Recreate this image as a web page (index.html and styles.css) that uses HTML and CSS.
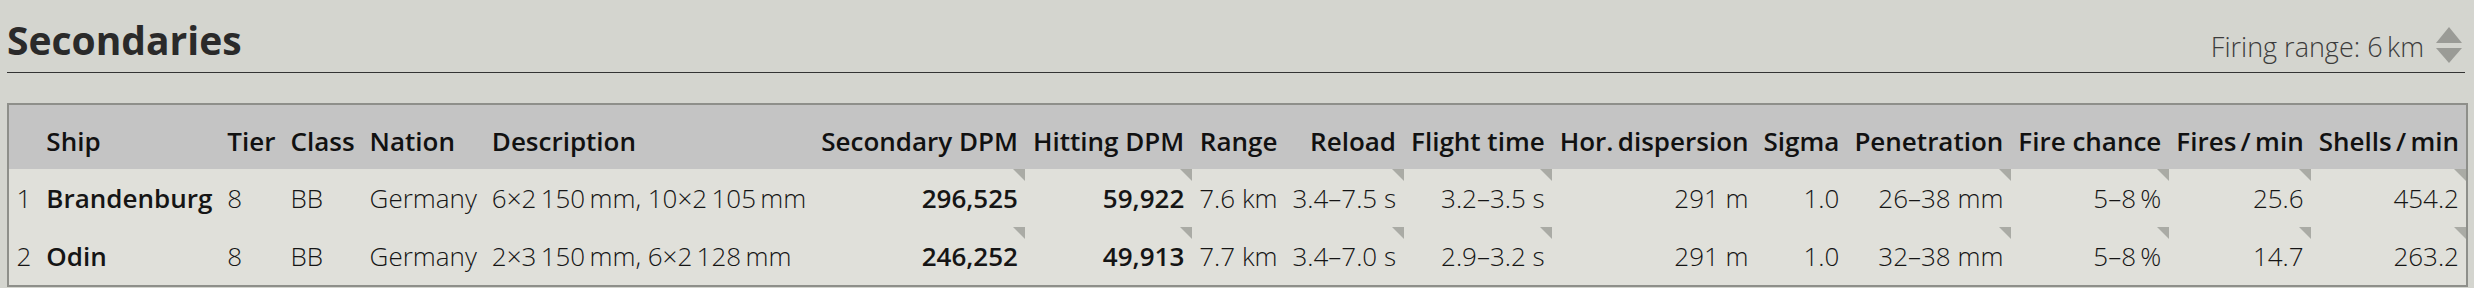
FILE: index.html
```html
<!DOCTYPE html>
<html lang="en">
<head>
<meta charset="utf-8">
<title>Secondaries</title>
<link rel="stylesheet" href="styles.css">
</head>
<body>
<div class="page">
  <div class="heading">
    <h2 class="title">Secondaries</h2>
    <div class="range">
      <span class="range-label">Firing range: 6&#8201;km</span>
      <svg class="spinner" width="26" height="36" viewBox="0 0 26 36" aria-hidden="true">
        <polygon points="13,0 26,16 0,16" fill="#9a9b96"/>
        <polygon points="0,21 26,21 13,36" fill="#9a9b96"/>
      </svg>
    </div>
  </div>
  <table class="grid">
    <thead>
      <tr>
        <th class="l"></th>
        <th class="l">Ship</th>
        <th class="l">Tier</th>
        <th class="l">Class</th>
        <th class="l">Nation</th>
        <th class="l">Description</th>
        <th>Secondary DPM</th>
        <th>Hitting DPM</th>
        <th>Range</th>
        <th>Reload</th>
        <th>Flight time</th>
        <th>Hor.&#8201;dispersion</th>
        <th>Sigma</th>
        <th>Penetration</th>
        <th>Fire chance</th>
        <th>Fires&#8201;/&#8201;min</th>
        <th>Shells&#8201;/&#8201;min</th>
      </tr>
    </thead>
    <tbody>
      <tr>
        <td class="l">1</td>
        <td class="l b">Brandenburg</td>
        <td class="l">8</td>
        <td class="l">BB</td>
        <td class="l">Germany</td>
        <td class="l">6×2&#8201;150&#8201;mm, 10×2&#8201;105&#8201;mm</td>
        <td class="b tip">296,525</td>
        <td class="b tip">59,922</td>
        <td>7.6 km</td>
        <td class="tip">3.4–7.5 s</td>
        <td class="tip">3.2–3.5 s</td>
        <td>291 m</td>
        <td>1.0</td>
        <td class="tip">26–38 mm</td>
        <td class="tip">5–8&#8201;%</td>
        <td class="tip">25.6</td>
        <td class="tip">454.2</td>
      </tr>
      <tr>
        <td class="l">2</td>
        <td class="l b">Odin</td>
        <td class="l">8</td>
        <td class="l">BB</td>
        <td class="l">Germany</td>
        <td class="l">2×3&#8201;150&#8201;mm, 6×2&#8201;128&#8201;mm</td>
        <td class="b tip">246,252</td>
        <td class="b tip">49,913</td>
        <td>7.7 km</td>
        <td class="tip">3.4–7.0 s</td>
        <td class="tip">2.9–3.2 s</td>
        <td>291 m</td>
        <td>1.0</td>
        <td class="tip">32–38 mm</td>
        <td class="tip">5–8&#8201;%</td>
        <td class="tip">14.7</td>
        <td class="tip">263.2</td>
      </tr>
    </tbody>
  </table>
</div>
</body>
</html>
```
FILE: styles.css
```css
html, body {
  margin: 0;
  padding: 0;
  background: #d4d5cf;
}

body {
  font-family: "Open Sans", "Noto Sans", sans-serif;
  color: #1a1a1a;
}

.page {
  padding: 13px 9px 0 7px;
}

.heading {
  display: flex;
  justify-content: space-between;
  align-items: flex-end;
  padding-bottom: 6px;
  border-bottom: 1px solid #333;
}

.title {
  margin: 0;
  font-size: 39px;
  font-weight: 700;
  line-height: 53px;
  color: #2a2a2a;
}

.range {
  display: flex;
  align-items: flex-end;
  gap: 12px;
  padding-right: 3px;
}

.range-label {
  font-size: 27px;
  font-weight: 300;
  line-height: 37px;
  padding-bottom: 1px;
  color: #3c3c3c;
}

.spinner {
  display: block;
  margin-bottom: 3px;
}

.grid {
  margin-top: 30px;
  border-collapse: collapse;
  border: 2px solid #8e8f8a;
  background: #e0e0da;
  white-space: nowrap;
}

.grid th {
  background: #c4c4c4;
  font-size: 26px;
  font-weight: 600;
  line-height: 35px;
  padding: 19px 7.5px 10px;
  text-align: right;
  vertical-align: bottom;
  color: #111;
}

.grid td {
  position: relative;
  font-size: 26px;
  font-weight: 300;
  line-height: 35px;
  padding: 12px 7.5px 11px;
  text-align: right;
  color: #151515;
}

.grid .l {
  text-align: left;
}

.grid td.b {
  font-weight: 600;
}

.grid td.tip::after {
  content: "";
  position: absolute;
  top: 0;
  right: 0;
  width: 0;
  height: 0;
  border-top: 12px solid #aaaba5;
  border-left: 12px solid transparent;
}
```
